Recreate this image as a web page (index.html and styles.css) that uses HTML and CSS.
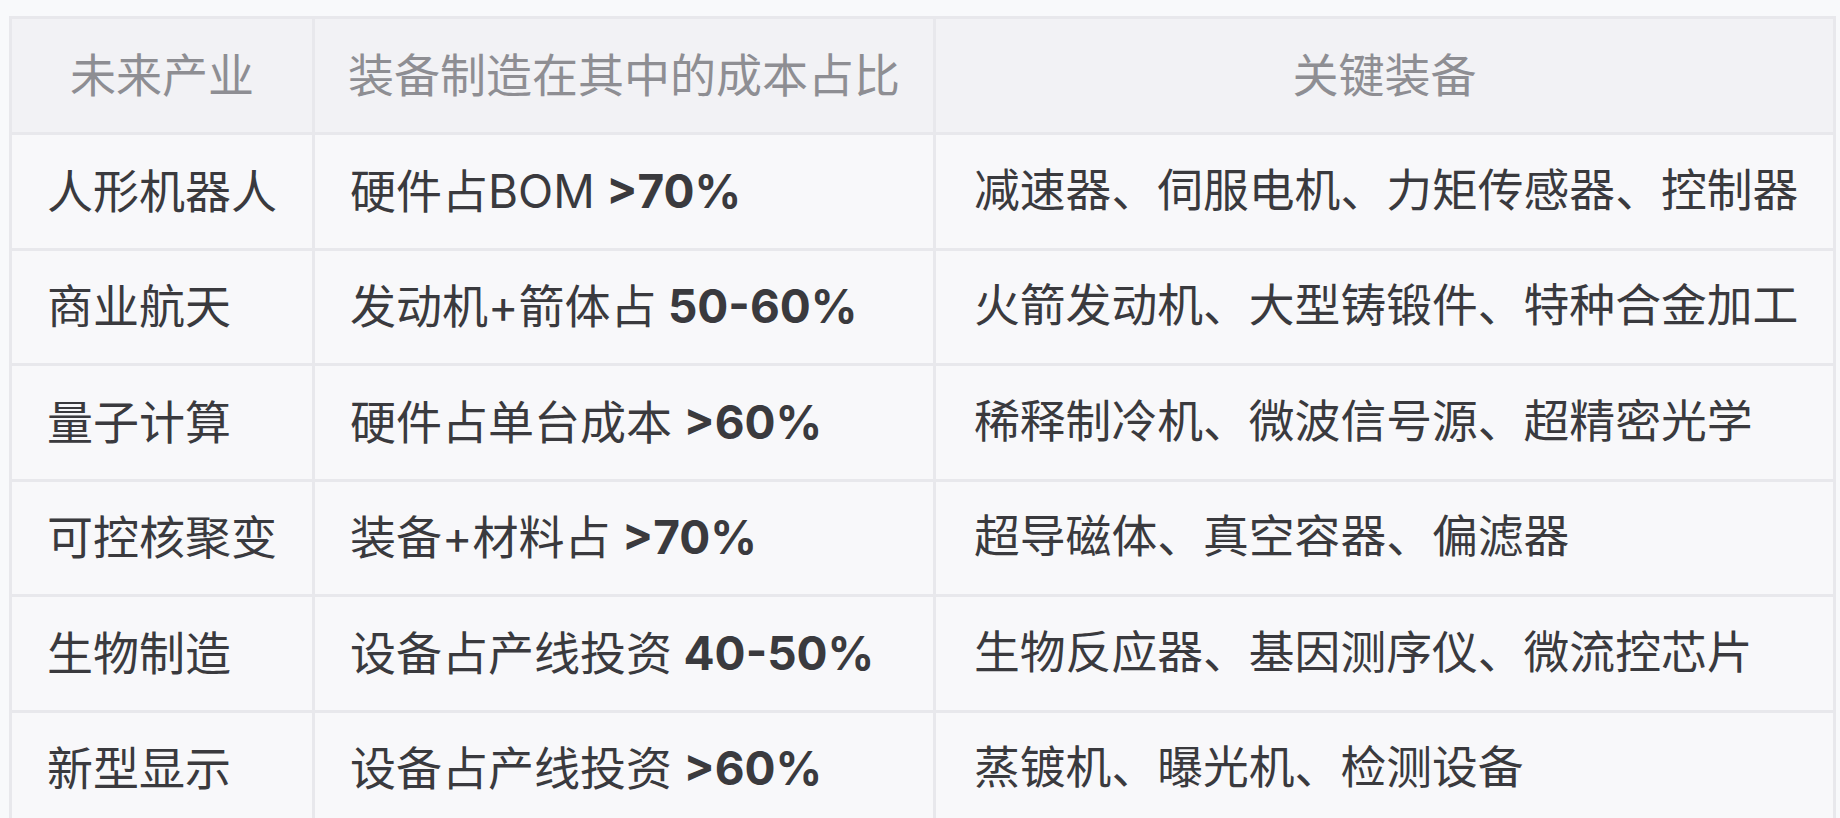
FILE: index.html
```html
<!DOCTYPE html>
<html lang="zh-CN">
<head>
<meta charset="utf-8">
<title>未来产业装备</title>
<link rel="stylesheet" href="styles.css">
</head>
<body>
<div class="table">
  <div class="cell head">未来产业</div>
  <div class="cell head">装备制造在其中的成本占比</div>
  <div class="cell head">关键装备</div>

  <div class="cell">人形机器人</div>
  <div class="cell">硬件占BOM <b>&gt;70%</b></div>
  <div class="cell wide">减速器、伺服电机、力矩传感器、控制器</div>

  <div class="cell">商业航天</div>
  <div class="cell">发动机+箭体占 <b>50-60%</b></div>
  <div class="cell wide">火箭发动机、大型铸锻件、特种合金加工</div>

  <div class="cell">量子计算</div>
  <div class="cell">硬件占单台成本 <b>&gt;60%</b></div>
  <div class="cell wide">稀释制冷机、微波信号源、超精密光学</div>

  <div class="cell">可控核聚变</div>
  <div class="cell">装备+材料占 <b>&gt;70%</b></div>
  <div class="cell wide">超导磁体、真空容器、偏滤器</div>

  <div class="cell">生物制造</div>
  <div class="cell">设备占产线投资 <b>40-50%</b></div>
  <div class="cell wide">生物反应器、基因测序仪、微流控芯片</div>

  <div class="cell">新型显示</div>
  <div class="cell">设备占产线投资 <b>&gt;60%</b></div>
  <div class="cell wide">蒸镀机、曝光机、检测设备</div>
</div>
</body>
</html>
```
FILE: styles.css
```css
html, body {
  margin: 0;
  padding: 0;
  background: #f8f9fb;
}

body {
  font-family: "Inter", "Noto Sans CJK SC", sans-serif;
  color: #3a3a3e;
}

.table {
  display: grid;
  grid-template-columns: 303px 621px 900px;
  width: max-content;
  margin: 16px 0 0 9px;
  border-left: 3px solid #e8e8ec;
  border-top: 3px solid #e8e8ec;
}

.cell {
  box-sizing: border-box;
  display: flex;
  align-items: center;
  height: 115.5px;
  padding: 0 35px;
  border-right: 3px solid #e8e8ec;
  border-bottom: 3px solid #e8e8ec;
  font-size: 46px;
  line-height: 1.2;
  white-space: nowrap;
  background: #f8f8fa;
}

.cell.wide {
  padding-left: 38px;
  font-size: 45.8px;
}

.cell.head {
  height: 116px;
  justify-content: center;
  color: #8e8e93;
  background: #f2f2f5;
}

.cell b {
  font-weight: 700;
  margin-left: 0.25em;
}
```
